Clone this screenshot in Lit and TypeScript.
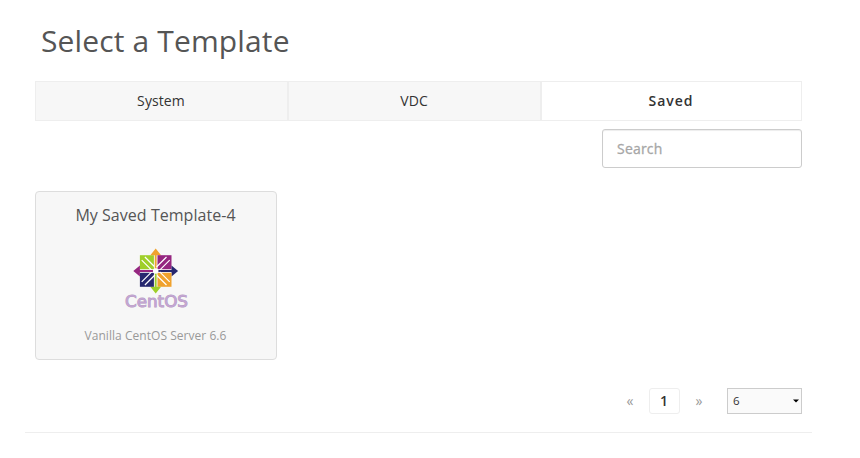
import { LitElement, html, css, svg } from "lit";
import { customElement, property, state } from "lit/decorators.js";

@customElement("centos-logo")
class CentosLogo extends LitElement {
  static styles = css`
    :host { display: block; width: 66px; height: 66px; }
    svg { display: block; }
    .word {
      font: 400 16px "DejaVu Sans", sans-serif;
      fill: #c3a5d2; stroke: #b499c1; stroke-width: 0.9px; paint-order: stroke;
    }
  `;

  // One quadrant of the emblem; the others are rotations about the centre.
  quadrant(angle: number, square: string, arrow: string) {
    return svg`<g transform="rotate(${angle})">
      <rect x="-15.8" y="-15.8" width="14" height="14" fill=${square} />
      <path d="M-14 -10.8 L-4 -0.8 M-10.8 -14 L-0.8 -4" stroke="#fff" stroke-width="1.2" fill="none" />
      <path d="M-0.9 -2 V-15.8 H-5.4 L0 -22.4 L5.4 -15.8 H0.9 V-2 Z" fill=${arrow} />
    </g>`;
  }

  render() {
    return html`<svg width="66" height="66" viewBox="0 0 66 66" role="img" aria-label="CentOS">
      <g transform="translate(32.7 25)">
        ${this.quadrant(0, "#9fcf2a", "#f0a22e")}
        ${this.quadrant(90, "#952680", "#27286f")}
        ${this.quadrant(180, "#f0a22e", "#9fcf2a")}
        ${this.quadrant(270, "#27286f", "#952680")}
        <circle r="2.8" fill="#fff" />
      </g>
      <text class="word" x="2" y="60.8" textLength="63" lengthAdjust="spacingAndGlyphs">CentOS</text>
    </svg>`;
  }
}

@customElement("template-card")
class TemplateCard extends LitElement {
  @property() name = "";
  @property() detail = "";

  static styles = css`
    :host {
      display: flex; flex-direction: column; align-items: center;
      box-sizing: border-box; width: 242px; height: 169px; padding-top: 12px;
      background: #f7f7f7; border: 1px solid #ddd; border-radius: 4px;
    }
    .name { font-size: 16px; line-height: 23px; color: #555; letter-spacing: 0.04px; padding-right: 1px; }
    .logo { margin-top: 19px; }
    .detail { margin-top: 15px; font-size: 12px; line-height: 18px; color: #999; letter-spacing: 0.04px; padding-right: 1px; }
  `;

  render() {
    return html`<div class="name">${this.name}</div>
      <centos-logo class="logo"></centos-logo>
      <div class="detail">${this.detail}</div>`;
  }
}

@customElement("app-root")
class AppRoot extends LitElement {
  @state() tab = "Saved";

  static styles = css`
    :host {
      display: block; box-sizing: border-box; height: 458px; padding: 20px 48px 0 25px;
      background: #fff; color: #333; font-family: "Open Sans", sans-serif; font-size: 14px;
    }
    .body { padding: 0 10px; width: 767px; }
    .title { margin: 0; padding-left: 6px; font-size: 30px; line-height: 42px; font-weight: 400; color: #555; letter-spacing: 0.14px; }
    .tabs { display: grid; grid-template-columns: 253px 253px 261px; height: 40px; margin-top: 19px; }
    .tab {
      box-sizing: border-box; border: 1px solid #eee; background: #f7f7f7; padding: 0 1px 0 0;
      font: 400 14px "Open Sans", sans-serif; color: #333; text-align: center; line-height: 38px;
      letter-spacing: 0.1px;
    }
    .tab.active { background: #fff; font-weight: 600; letter-spacing: 1px; }
    .filter { display: flex; justify-content: flex-end; margin-top: 8px; }
    .search {
      box-sizing: border-box; width: 200px; height: 39px; padding: 0 14px; border: 1px solid #ccc;
      border-radius: 3px; box-shadow: inset 0 1px 1px rgba(0, 0, 0, 0.075);
      font: 400 14px "Open Sans", sans-serif; color: #555; outline: none; letter-spacing: 0.2px;
    }
    .search::placeholder { color: #a6a6a6; opacity: 1; -webkit-text-stroke: 0.3px #a6a6a6; }
    .cards { display: flex; margin-top: 23px; }
    .pager { display: flex; justify-content: flex-end; align-items: center; height: 26px; margin-top: 28px; }
    .step { width: 38px; text-align: center; color: #999; line-height: 24px; }
    .page {
      box-sizing: border-box; width: 31px; height: 26px; border: 1px solid #eee; border-radius: 3px;
      text-align: center; font-weight: 600; line-height: 24px; padding-right: 1px;
    }
    .size {
      display: flex; align-items: center; justify-content: space-between; box-sizing: border-box;
      width: 75px; height: 26px; margin-left: 9px; padding: 0 2px 0 5px;
      border: 1px solid #ccc; background: #fafafa; font-size: 11.5px; line-height: 24px;
    }
    .rule { width: 787px; height: 1px; margin-top: 18px; background: #eee; }
  `;

  render() {
    return html`
      <div class="body">
        <h1 class="title">Select a Template</h1>
        <div class="tabs">
          ${["System", "VDC", "Saved"].map(
            (t) => html`<button class="tab ${t === this.tab ? "active" : ""}" @click=${() => (this.tab = t)}>${t}</button>`
          )}
        </div>
        <div class="filter"><input class="search" placeholder="Search" /></div>
        <div class="cards">
          <template-card name="My Saved Template-4" detail="Vanilla CentOS Server 6.6"></template-card>
        </div>
        <div class="pager">
          <span class="step">«</span><span class="page">1</span><span class="step">»</span>
          <div class="size">
            <span>6</span>
            <svg width="6" height="4" viewBox="0 0 6 4"><path d="M0 0.5 H6 L3 3.5 Z" fill="#000" /></svg>
          </div>
        </div>
      </div>
      <div class="rule"></div>
    `;
  }
}
